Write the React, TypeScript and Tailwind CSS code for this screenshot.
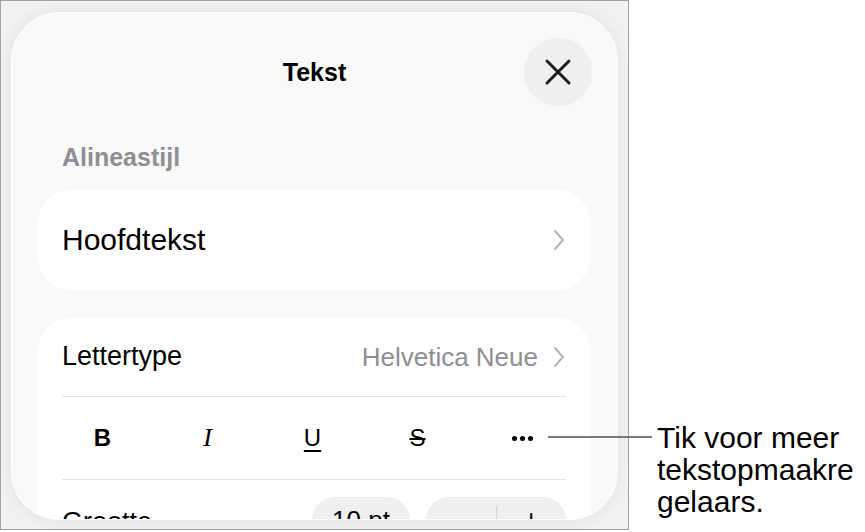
import React from "react";

function Chevron() {
  return (
    <svg width="12" height="22" viewBox="0 0 12 22" fill="none" className="shrink-0">
      <path d="M2 2l8 9-8 9" stroke="#b4b4b8" strokeWidth="2" strokeLinecap="round" strokeLinejoin="round" />
    </svg>
  );
}

function CloseIcon() {
  return (
    <svg width="28" height="28" viewBox="0 0 28 28" fill="none">
      <path d="M3 3l22 22M25 3L3 25" stroke="#1c1c1e" strokeWidth="3" strokeLinecap="round" />
    </svg>
  );
}

export default function App() {
  return (
    <div className="relative flex h-[532px] w-[865px] bg-white font-['Liberation_Sans',Arial,sans-serif] text-black">
      {/* screenshot frame */}
      <div className="h-[530px] w-[629px] border border-[#a3a3a3] bg-[#f2f2f2] pl-[10px] pt-[11px]">
        <div className="h-[508px] w-[607px] overflow-hidden rounded-[48px] border border-white bg-[#f9f9f8] pt-[25px] shadow-[0_0_18px_rgba(0,0,0,0.07)]">
          {/* header */}
          <div className="relative flex h-[68px] items-center justify-center">
            <span className="text-[25px] font-bold leading-none">Tekst</span>
            <button className="absolute right-[25px] top-0 flex h-[68px] w-[68px] items-center justify-center rounded-full bg-[#efefef]">
              <CloseIcon />
            </button>
          </div>

          <div className="mt-[37px] pl-[50px] text-[25px] font-bold leading-[28px] text-[#8e8e93]">Alineastijl</div>

          {/* paragraph style */}
          <div className="ml-[25px] mt-[18px] flex h-[102px] w-[554px] items-center justify-between rounded-[36px] bg-white pl-[25px] pr-[26px]">
            <span className="text-[30px] leading-none">Hoofdtekst</span>
            <Chevron />
          </div>

          {/* font card */}
          <div className="ml-[25px] mt-[26px] w-[554px] rounded-[36px] bg-white">
            <div className="mx-[25px] flex h-[80px] items-center justify-between border-b border-[#e4e4e4] pr-[1px]">
              <span className="text-[27px] leading-none">Lettertype</span>
              <div className="flex items-center gap-[15px]">
                <span className="text-[26px] leading-none text-[#8e8e93]">Helvetica Neue</span>
                <Chevron />
              </div>
            </div>
            <div className="mx-[25px] border-b border-[#e4e4e4]">
              <div className="-ml-[12px] grid h-[82px] w-[525px] grid-cols-5 items-center justify-items-center text-[24px] leading-none">
                <span className="font-bold">B</span>
                <span className="font-['Liberation_Serif',serif] text-[26px] italic">I</span>
                <span className="underline decoration-[2px] underline-offset-[4px]">U</span>
                <span className="line-through decoration-[2px]">S</span>
                <span className="flex gap-[3px]">
                  <span className="h-[5px] w-[5px] rounded-full bg-black" />
                  <span className="h-[5px] w-[5px] rounded-full bg-black" />
                  <span className="h-[5px] w-[5px] rounded-full bg-black" />
                </span>
              </div>
            </div>
            <div className="mx-[25px] flex h-[80px] items-start justify-between pt-[17px]">
              <span className="pt-[12px] text-[27px] leading-none">Grootte</span>
              <div className="flex gap-[16px]">
                <div className="flex h-[46px] w-[98px] items-center justify-center rounded-[23px] bg-[#efefef] text-[26px]">10 pt</div>
                <div className="flex h-[46px] w-[140px] items-center rounded-[23px] bg-[#efefef] text-[28px]">
                  <span className="flex-1 text-center">−</span>
                  <span className="h-[28px] w-px bg-[#d4d4d4]" />
                  <span className="flex-1 text-center">+</span>
                </div>
              </div>
            </div>
          </div>
        </div>
      </div>

      {/* callout */}
      <div className="absolute left-[548px] top-[436px] h-[2px] w-[104px] bg-[#7a7a7a]" />
      <div className="absolute left-[657px] top-[422px] whitespace-nowrap text-[30px] leading-[32px]">
        Tik voor meer
        <br />
        tekstopmaakre
        <br />
        gelaars.
      </div>
    </div>
  );
}
